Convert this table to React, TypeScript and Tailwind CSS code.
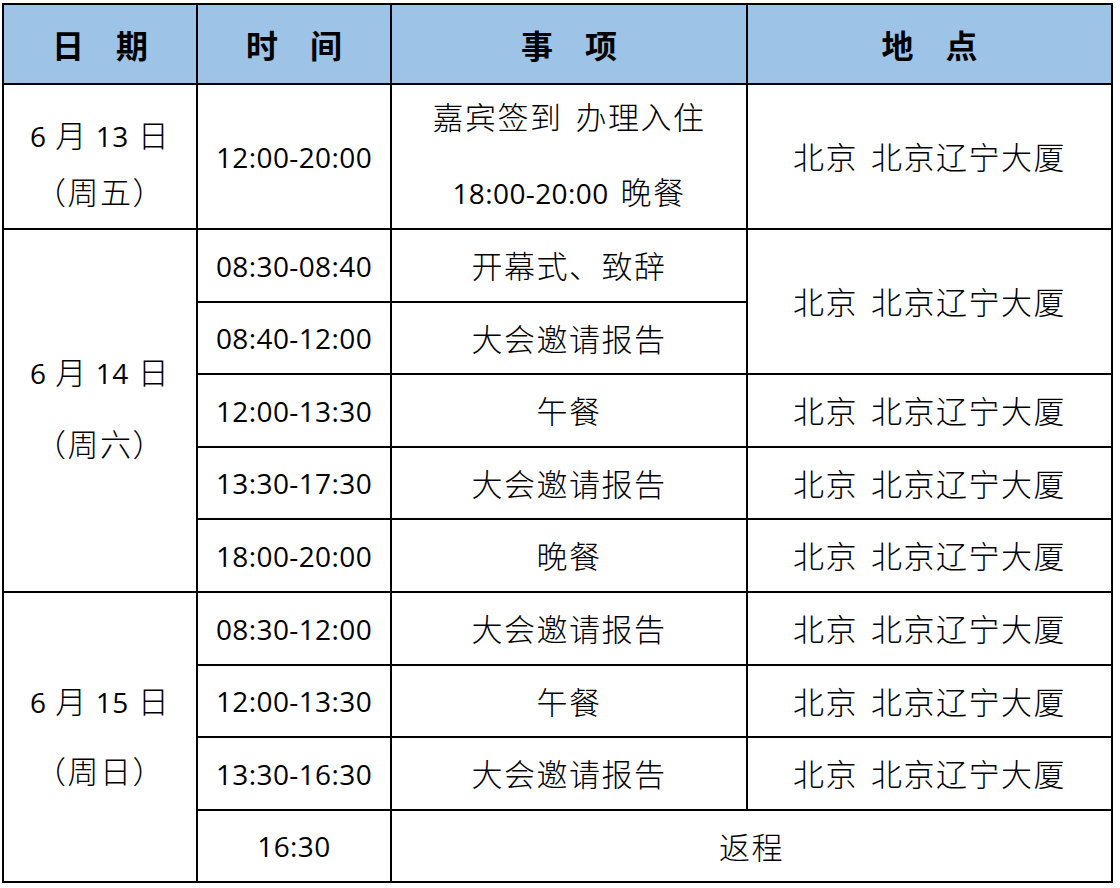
const cjk = "font-['Noto_Sans_CJK_SC',sans-serif] text-[31px] font-light tracking-[1.5px]"
const num = "font-['Open_Sans','Noto_Sans_CJK_SC',sans-serif] text-[28px] tracking-[0.4px]"
const cell = "border-2 border-black text-center align-middle text-black p-0"

function Zh({ children }: { children: React.ReactNode }) {
  return <span className={cjk}>{children}</span>
}

function Num({ children }: { children: React.ReactNode }) {
  return <span className={num}>{children}</span>
}

function Gap({ w = "w-[13px]" }: { w?: string }) {
  return <span className={`inline-block ${w}`} />
}

function Place() {
  return (
    <span className="whitespace-nowrap">
      <Zh>北京</Zh>
      <Gap />
      <Zh>北京辽宁大厦</Zh>
    </span>
  )
}

function DateCell({ day, week, rows, gap, pad }: { day: string; week: string; rows?: number; gap: string; pad: string }) {
  return (
    <td rowSpan={rows} className={cell}>
      <div className={`flex flex-col items-center ${gap} ${pad}`}>
        <div className="whitespace-nowrap leading-none">
          <Num>6</Num>
          <Gap w="w-[9px]" />
          <Zh>月</Zh>
          <Gap w="w-[8px]" />
          <Num>{day}</Num>
          <Gap w="w-[9px]" />
          <Zh>日</Zh>
        </div>
        <div className="leading-none">
          <Zh>（周{week}）</Zh>
        </div>
      </div>
    </td>
  )
}

function Row({ time, item, loc = true }: { time: string; item: string; loc?: boolean }) {
  return (
    <>
      <td className={cell}>
        <Num>{time}</Num>
      </td>
      <td className={cell}>
        <Zh>{item}</Zh>
      </td>
      {loc && (
        <td className={cell}>
          <Place />
        </td>
      )}
    </>
  )
}

export default function App() {
  const head = "border-2 border-black bg-[#9dc3e6] text-center align-middle font-['Noto_Sans_CJK_SC',sans-serif] text-[32px] font-bold text-black"

  return (
    <div className="min-h-screen bg-white pl-[2px] pt-[3px]">
      <table className="table-fixed border-collapse">
        <colgroup>
          <col className="w-[194px]" />
          <col className="w-[194px]" />
          <col className="w-[356px]" />
          <col className="w-[365px]" />
        </colgroup>
        <tbody>
          <tr className="h-[80px]">
            <td className={head}>日　期</td>
            <td className={head}>时　间</td>
            <td className={head}>事　项</td>
            <td className={head}>地　点</td>
          </tr>

          {/* 6月13日 */}
          <tr className="h-[145px]">
            <DateCell day="13" week="五" gap="gap-[25px]" pad="pt-[10px]" />
            <td className={cell}>
              <Num>12:00-20:00</Num>
            </td>
            <td className={cell}>
              <div className="flex flex-col items-center gap-[44px] pb-[6px]">
                <div className="whitespace-nowrap leading-none">
                  <Zh>嘉宾签到</Zh>
                  <Gap />
                  <Zh>办理入住</Zh>
                </div>
                <div className="whitespace-nowrap leading-none">
                  <Num>18:00-20:00</Num>
                  <Gap w="w-[12px]" />
                  <Zh>晚餐</Zh>
                </div>
              </div>
            </td>
            <td className={cell}>
              <Place />
            </td>
          </tr>

          {/* 6月14日 */}
          <tr className="h-[73px]">
            <DateCell day="14" week="六" rows={5} gap="gap-[40px]" pad="pb-[8px]" />
            <td className={cell}>
              <Num>08:30-08:40</Num>
            </td>
            <td className={cell}>
              <Zh>开幕式、致辞</Zh>
            </td>
            <td rowSpan={2} className={cell}>
              <Place />
            </td>
          </tr>
          <tr className="h-[72px]">
            <Row time="08:40-12:00" item="大会邀请报告" loc={false} />
          </tr>
          <tr className="h-[73px]">
            <Row time="12:00-13:30" item="午餐" />
          </tr>
          <tr className="h-[72px]">
            <Row time="13:30-17:30" item="大会邀请报告" />
          </tr>
          <tr className="h-[73px]">
            <Row time="18:00-20:00" item="晚餐" />
          </tr>

          {/* 6月15日 */}
          <tr className="h-[73px]">
            <DateCell day="15" week="日" rows={4} gap="gap-[38px]" pad="pb-[6px]" />
            <Row time="08:30-12:00" item="大会邀请报告" />
          </tr>
          <tr className="h-[72px]">
            <Row time="12:00-13:30" item="午餐" />
          </tr>
          <tr className="h-[73px]">
            <Row time="13:30-16:30" item="大会邀请报告" />
          </tr>
          <tr className="h-[72px]">
            <td className={cell}>
              <Num>16:30</Num>
            </td>
            <td colSpan={2} className={cell}>
              <Zh>返程</Zh>
            </td>
          </tr>
        </tbody>
      </table>
    </div>
  )
}
